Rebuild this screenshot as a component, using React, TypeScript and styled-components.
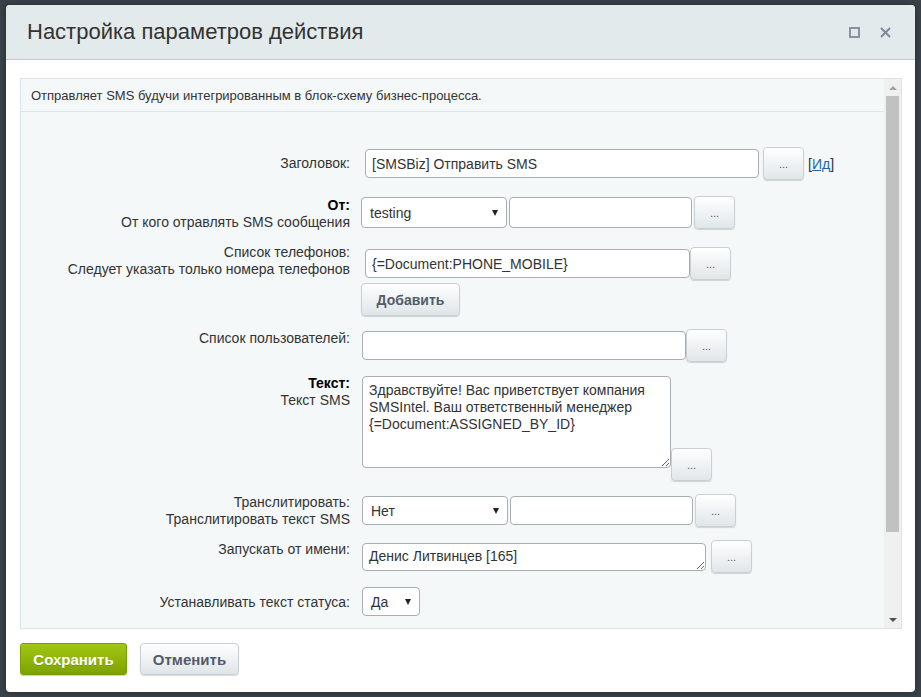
import React from "react";
import styled, { createGlobalStyle } from "styled-components";

const Global = createGlobalStyle`
  html, body { margin: 0; padding: 0; }
  body {
    background: #394249;
    font-family: "Liberation Sans", Arial, sans-serif;
    height: 697px;
    overflow: hidden;
  }
  #root { height: 697px; }
`;

const Dialog = styled.div`
  margin: 5px 0 0 6px;
  width: 909px;
  height: 687px;
  background: #fff;
  border-radius: 4px;
  display: flex;
  flex-direction: column;
  overflow: hidden;
  box-shadow: 0 0 6px rgba(0, 0, 0, 0.35);
`;

const Header = styled.div`
  height: 54px;
  flex: none;
  background: #e2eaec;
  border-bottom: 1px solid #c3cbcf;
  display: flex;
  align-items: center;
  justify-content: space-between;
  padding: 0 24px 0 21px;
`;

const Title = styled.div`
  font-size: 22px;
  color: #333;
`;

const HeaderIcons = styled.div`
  display: flex;
  align-items: center;
  gap: 19px;
`;

const IconBtn = styled.span`
  display: flex;
  width: 12px;
  height: 12px;
  align-items: center;
  justify-content: center;
`;

const Body = styled.div`
  padding: 18px 13px 0 14px;
  flex: none;
`;

const Panel = styled.div`
  height: 551px;
  box-sizing: border-box;
  border: 1px solid #dbe5e9;
  background: #f5f8f9;
  display: flex;
  overflow: hidden;
`;

const Content = styled.div`
  flex: 1;
  display: flex;
  flex-direction: column;
  min-width: 0;
`;

const Description = styled.div`
  height: 32px;
  flex: none;
  border-bottom: 1px solid #dde6ea;
  padding-left: 10px;
  display: flex;
  align-items: center;
  font-size: 13px;
  color: #333;
`;

const Form = styled.div`
  padding-top: 35px;
  display: flex;
  flex-direction: column;
`;

const Row = styled.div<{ $mt: number }>`
  display: grid;
  grid-template-columns: 329px 1fr;
  column-gap: 11px;
  align-items: start;
  margin-top: ${(p) => p.$mt}px;
`;

const Label = styled.div<{ $off: number }>`
  text-align: right;
  font-size: 14px;
  line-height: 16.5px;
  color: #333;
  margin-top: ${(p) => p.$off}px;
`;

const Strong = styled.b`
  color: #000;
  font-weight: bold;
`;

const Controls = styled.div<{ $ml?: number; $gap?: number; $align?: string }>`
  display: flex;
  align-items: ${(p) => p.$align || "center"};
  gap: ${(p) => p.$gap ?? 0}px;
  margin-left: ${(p) => p.$ml ?? 0}px;
`;

const Stack = styled.div`
  display: flex;
  flex-direction: column;
  align-items: flex-start;
  gap: 3px;
`;

const TextInput = styled.input<{ $w: number; $h?: number }>`
  box-sizing: border-box;
  width: ${(p) => p.$w}px;
  height: ${(p) => p.$h ?? 29}px;
  border: 1px solid #a9aeb2;
  border-radius: 4px;
  background: #fff;
  padding: 0 6px;
  font-family: "Liberation Sans", Arial, sans-serif;
  font-size: 14px;
  color: #333;
  outline: none;
  margin: 0;
`;

const TextArea = styled.textarea<{ $w: number; $h: number; $mb?: number }>`
  box-sizing: border-box;
  width: ${(p) => p.$w}px;
  height: ${(p) => p.$h}px;
  border: 1px solid #a9aeb2;
  border-radius: 4px;
  background: #fff;
  padding: ${(p) => (p.$h < 40 ? "4px 6px" : "5px 6px")};
  font-family: "Liberation Sans", Arial, sans-serif;
  font-size: 14px;
  line-height: 17px;
  color: #333;
  outline: none;
  margin: 0 0 ${(p) => p.$mb ?? 0}px 0;
  overflow: hidden;
  resize: both;
`;

const Select = styled.div<{ $w: number; $h?: number }>`
  box-sizing: border-box;
  width: ${(p) => p.$w}px;
  height: ${(p) => p.$h ?? 29}px;
  border: 1px solid #a9aeb2;
  border-radius: 4px;
  background: #fff;
  padding: 0 8px 0 8px;
  display: flex;
  align-items: center;
  justify-content: space-between;
  font-size: 14px;
  color: #333;
  flex: none;
`;

const Caret = styled.span`
  width: 0;
  height: 0;
  border-left: 3px solid transparent;
  border-right: 3px solid transparent;
  border-top: 6px solid #222;
`;

const DotsButton = styled.button<{ $self?: string }>`
  box-sizing: border-box;
  width: 41px;
  height: 33px;
  flex: none;
  border: 1px solid #c9d0d4;
  border-radius: 4px;
  background: linear-gradient(#ffffff, #e0e6e9);
  box-shadow: 0 1px 1px rgba(0, 0, 0, 0.15);
  color: #535c69;
  font-family: "Liberation Sans", Arial, sans-serif;
  font-size: 11px;
  padding: 0;
  align-self: ${(p) => p.$self || "auto"};
  cursor: pointer;
`;

const GrayButton = styled.button<{ $w: number; $h: number; $fs: number }>`
  box-sizing: border-box;
  width: ${(p) => p.$w}px;
  height: ${(p) => p.$h}px;
  border: 1px solid #c9d0d4;
  border-radius: 4px;
  background: linear-gradient(#ffffff, #dfe5e8);
  box-shadow: 0 1px 1px rgba(0, 0, 0, 0.15);
  color: #535c69;
  font-family: "Liberation Sans", Arial, sans-serif;
  font-weight: bold;
  font-size: ${(p) => p.$fs}px;
  padding: 0;
  cursor: pointer;
`;

const GreenButton = styled.button`
  box-sizing: border-box;
  width: 107px;
  height: 32px;
  border: 1px solid #7a9d04;
  border-radius: 3px;
  background: linear-gradient(#a2c614, #7ea300);
  box-shadow: 0 1px 1px rgba(0, 0, 0, 0.2);
  color: #fff;
  font-family: "Liberation Sans", Arial, sans-serif;
  font-weight: bold;
  font-size: 15px;
  text-shadow: 0 1px rgba(0, 0, 0, 0.15);
  padding: 0;
  cursor: pointer;
`;

const IdLink = styled.span`
  font-size: 14px;
  color: #333;
  a {
    color: #2067b0;
    text-decoration: underline;
  }
`;

const Scrollbar = styled.div`
  width: 17px;
  flex: none;
  background: #f1f0f0;
  display: flex;
  flex-direction: column;
  align-items: center;
`;

const ScrollArrow = styled.div<{ $down?: boolean }>`
  height: 17px;
  width: 17px;
  flex: none;
  display: flex;
  align-items: center;
  justify-content: center;
  &::after {
    content: "";
    width: 0;
    height: 0;
    border-left: 4px solid transparent;
    border-right: 4px solid transparent;
    ${(p) =>
      p.$down
        ? "border-top: 4px solid #505050;"
        : "border-bottom: 4px solid #a3a3a3;"}
  }
`;

const Thumb = styled.div`
  width: 13px;
  height: 436px;
  background: #c1c1c1;
  flex: none;
`;

const ScrollSpace = styled.div`
  flex: 1;
`;

const Footer = styled.div`
  padding: 14px 0 0 14px;
  display: flex;
  gap: 13px;
`;

export default function App() {
  return (
    <>
      <Global />
      <Dialog>
        <Header>
          <Title>Настройка параметров действия</Title>
          <HeaderIcons>
            <IconBtn>
              <svg width="11" height="11" viewBox="0 0 11 11">
                <rect x="1" y="1" width="9" height="9" fill="none" stroke="#7f8b9b" strokeWidth="1.8" />
              </svg>
            </IconBtn>
            <IconBtn>
              <svg width="11" height="11" viewBox="0 0 11 11">
                <path d="M1 1 L10 10 M10 1 L1 10" stroke="#7f8b9b" strokeWidth="2" />
              </svg>
            </IconBtn>
          </HeaderIcons>
        </Header>
        <Body>
          <Panel>
            <Content>
              <Description>
                Отправляет SMS будучи интегрированным в блок-схему бизнес-процесса.
              </Description>
              <Form>
                <Row $mt={0}>
                  <Label $off={8}>Заголовок:</Label>
                  <Controls $ml={4} $gap={4}>
                    <TextInput $w={394} defaultValue="[SMSBiz] Отправить SMS" />
                    <DotsButton>...</DotsButton>
                    <IdLink>
                      [<a>Ид</a>]
                    </IdLink>
                  </Controls>
                </Row>
                <Row $mt={16}>
                  <Label $off={1}>
                    <Strong>От:</Strong>
                    <br />
                    От кого отравлять SMS сообщения
                  </Label>
                  <Controls $gap={2}>
                    <Select $w={146} $h={31}>
                      testing <Caret />
                    </Select>
                    <TextInput $w={183} $h={31} defaultValue="" />
                    <DotsButton>...</DotsButton>
                  </Controls>
                </Row>
                <Row $mt={17}>
                  <Label $off={-3}>
                    Список телефонов:
                    <br />
                    Следует указать только номера телефонов
                  </Label>
                  <Stack>
                    <Controls $ml={4}>
                      <TextInput $w={325} defaultValue="{=Document:PHONE_MOBILE}" />
                      <DotsButton>...</DotsButton>
                    </Controls>
                    <GrayButton $w={99} $h={33} $fs={14}>
                      Добавить
                    </GrayButton>
                  </Stack>
                </Row>
                <Row $mt={13}>
                  <Label $off={1}>Список пользователей:</Label>
                  <Controls $ml={1}>
                    <TextInput $w={324} defaultValue="" />
                    <DotsButton>...</DotsButton>
                  </Controls>
                </Row>
                <Row $mt={14}>
                  <Label $off={-1}>
                    <Strong>Текст:</Strong>
                    <br />
                    Текст SMS
                  </Label>
                  <Controls $ml={1} $align="flex-start">
                    <TextArea
                      $w={309}
                      $h={92}
                      $mb={13}
                      defaultValue={
                        "Здравствуйте! Вас приветствует компания SMSIntel. Ваш ответственный менеджер {=Document:ASSIGNED_BY_ID}"
                      }
                    />
                    <DotsButton $self="flex-end">...</DotsButton>
                  </Controls>
                </Row>
                <Row $mt={13}>
                  <Label $off={0}>
                    Транслитировать:
                    <br />
                    Транслитировать текст SMS
                  </Label>
                  <Controls $ml={1} $gap={2}>
                    <Select $w={146}>
                      Нет <Caret />
                    </Select>
                    <TextInput $w={183} defaultValue="" />
                    <DotsButton>...</DotsButton>
                  </Controls>
                </Row>
                <Row $mt={13}>
                  <Label $off={1}>Запускать от имени:</Label>
                  <Controls $ml={1} $gap={5}>
                    <TextArea $w={344} $h={28} defaultValue="Денис Литвинцев [165]" />
                    <DotsButton>...</DotsButton>
                  </Controls>
                </Row>
                <Row $mt={14}>
                  <Label $off={7}>Устанавливать текст статуса:</Label>
                  <Controls $ml={1}>
                    <Select $w={58}>
                      Да <Caret />
                    </Select>
                  </Controls>
                </Row>
              </Form>
            </Content>
            <Scrollbar>
              <ScrollArrow />
              <Thumb />
              <ScrollSpace />
              <ScrollArrow $down />
            </Scrollbar>
          </Panel>
        </Body>
        <Footer>
          <GreenButton>Сохранить</GreenButton>
          <GrayButton $w={99} $h={32} $fs={15}>
            Отменить
          </GrayButton>
        </Footer>
      </Dialog>
    </>
  );
}
